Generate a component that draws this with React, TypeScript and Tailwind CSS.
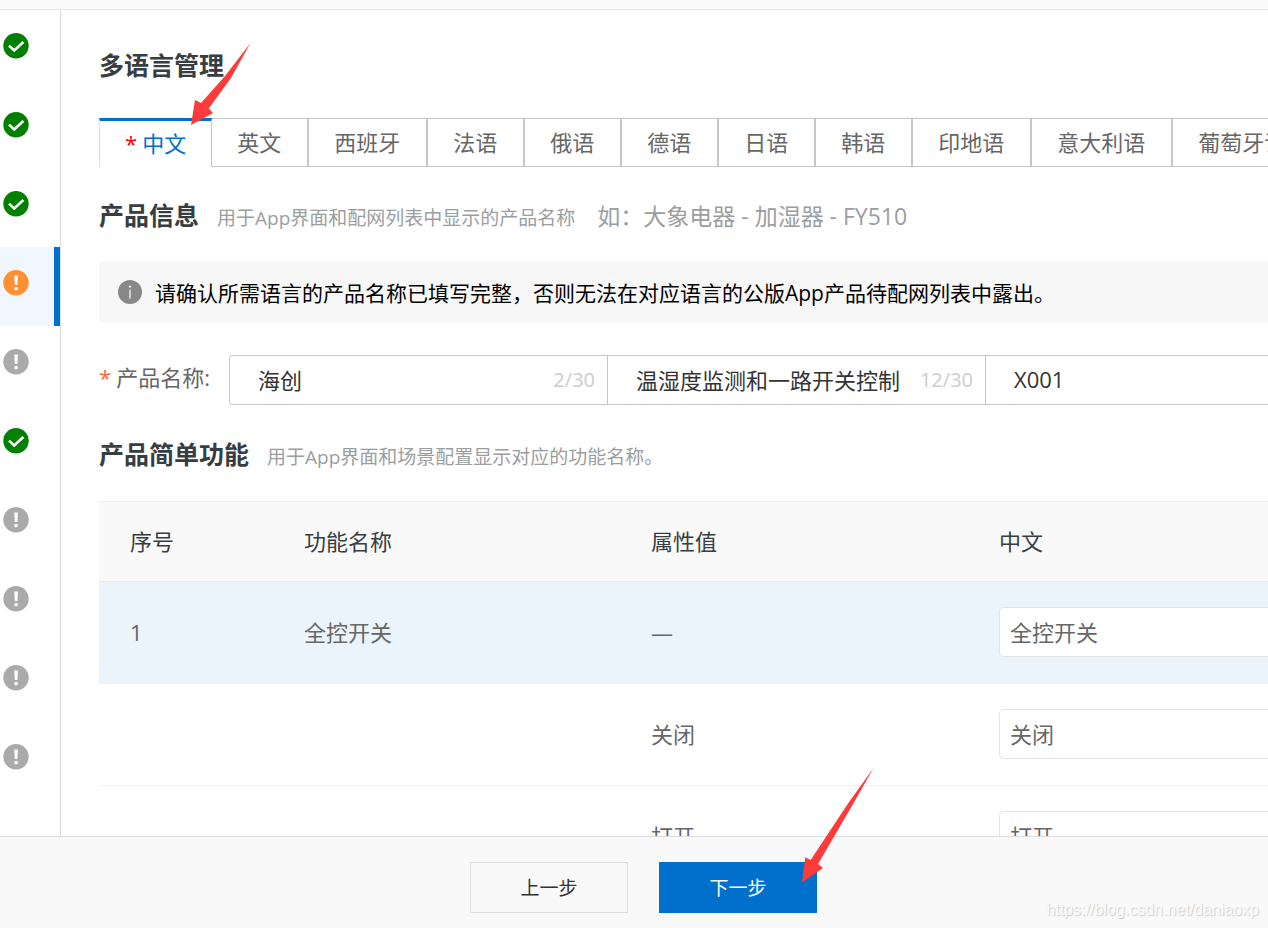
import { useState } from "react";

type StepStatus = "done" | "warning" | "pending";

const STEPS: { id: number; status: StepStatus; active?: boolean }[] = [
  { id: 1, status: "done" },
  { id: 2, status: "done" },
  { id: 3, status: "done" },
  { id: 4, status: "warning", active: true },
  { id: 5, status: "pending" },
  { id: 6, status: "done" },
  { id: 7, status: "pending" },
  { id: 8, status: "pending" },
  { id: 9, status: "pending" },
  { id: 10, status: "pending" },
];

const STATUS_COLOR: Record<StepStatus, string> = {
  done: "text-[#008000]",
  warning: "text-[#ff8f33]",
  pending: "text-[#aaaaaa]",
};

const LANGUAGES = ["中文", "英文", "西班牙", "法语", "俄语", "德语", "日语", "韩语", "印地语", "意大利语", "葡萄牙语"];

const NAME_FIELDS = [
  { id: "brand", value: "海创", count: "2/30" },
  { id: "category", value: "温湿度监测和一路开关控制", count: "12/30" },
  { id: "model", value: "X001", count: "4/30" },
];

const ROWS = [
  { no: "1", name: "全控开关", attr: "—", text: "全控开关", highlight: true },
  { no: "", name: "", attr: "关闭", text: "关闭", highlight: false },
  { no: "", name: "", attr: "打开", text: "打开", highlight: false },
];

function StepIcon({ status }: { status: StepStatus }) {
  return (
    <svg viewBox="0 0 26 26" className={`w-[26px] h-[26px] ${STATUS_COLOR[status]}`} aria-hidden="true">
      <circle cx="13" cy="12.7" r="12.7" fill="currentColor" />
      {status === "done" ? (
        <path d="M6 12.6l5.2 4.8 9.2-8.4" fill="none" stroke="#fff" strokeWidth="2.6" />
      ) : (
        <>
          <path d="M11.3 5.5h3.6l-.5 9.6h-2.6z" fill="#fff" />
          <rect x="11.4" y="17" width="3.4" height="3.3" rx="1.2" fill="#fff" />
        </>
      )}
    </svg>
  );
}

function InfoIcon() {
  return (
    <svg viewBox="0 0 24 24" className="w-6 h-6 shrink-0" aria-hidden="true">
      <circle cx="12" cy="12" r="12" fill="#888" />
      <circle cx="12" cy="6.6" r="1.2" fill="#f0f0f0" />
      <path d="M12 9.8v8.6" stroke="#e4e4e4" strokeWidth="1.6" />
    </svg>
  );
}

export default function App() {
  const [lang, setLang] = useState("中文");

  return (
    <div className="relative flex flex-col h-screen overflow-hidden bg-white text-[#666] font-['Open_Sans','Noto_Sans_CJK_SC',sans-serif]">
      <header className="h-[10px] shrink-0 bg-[#fafafa] border-b border-[#e6e6e6]" />

      <div className="flex flex-1 min-h-0">
        <nav aria-label="步骤" className="w-[61px] shrink-0 border-r border-[#dcdcdc]">
          {STEPS.map((s) => (
            <a
              key={s.id}
              href={`#step-${s.id}`}
              aria-label={`步骤 ${s.id}`}
              className={`flex h-[79px] items-start pt-[23px] pl-[3px] ${s.active ? "bg-[#f0f7ff] border-r-6 border-[#0070cc]" : ""}`}
            >
              <StepIcon status={s.status} />
            </a>
          ))}
        </nav>

        <main className="flex-1 min-w-0 overflow-auto [scrollbar-width:none] pl-[38px] pt-[37px]">
          <div className="min-w-[1390px]">
            <h1 className="text-[25px] leading-9 font-bold text-[#373d41]">多语言管理</h1>

            <div role="tablist" className="flex mt-[35px] text-[22px] leading-[30px]">
              {LANGUAGES.map((l) => (
                <button
                  key={l}
                  role="tab"
                  aria-selected={l === lang}
                  onClick={() => setLang(l)}
                  className={`flex items-center justify-center h-[49px] shrink-0 pb-0.5 border-r ${
                    l === lang
                      ? "border-l border-t-3 border-t-[#0070cc] border-l-[#dedede] border-r-[#c3c7cc] px-[25px] text-[#0070cc]"
                      : "border-y border-l border-[#c3c7cc] pl-[25px] pr-[26px] nth-2:border-l-0 hover:text-[#0070cc]"
                  }`}
                >
                  {l === "中文" && <span className="mr-[5px] text-[#ff0000]">*</span>}
                  {l}
                </button>
              ))}
            </div>

            <div className="flex items-baseline mt-[30px] h-9">
              <h2 className="text-[25px] leading-9 font-bold text-[#373d41]">产品信息</h2>
              <p className="ml-[18px] text-[19px] text-[#9b9ea0]">用于App界面和配网列表中显示的产品名称</p>
              <p className="ml-[22px] text-[23px] leading-9 text-[#9b9ea0]">如：大象电器 - 加湿器 - FY510</p>
            </div>

            <div role="note" className="flex items-center gap-[13px] mt-7 h-[62px] px-[19px] rounded bg-[#f7f7f7] text-[21px] text-black">
              <InfoIcon />
              <p className="pt-[3px]">请确认所需语言的产品名称已填写完整，否则无法在对应语言的公版App产品待配网列表中露出。</p>
            </div>

            <div className="flex mt-8">
              <label htmlFor="brand" className="w-[130px] text-[22px] leading-11">
                <span className="mr-[5px] text-[#ff6a3d]">*</span>产品名称:
              </label>
              <div className="flex h-[50px] rounded border border-[#c3c7cc]">
                {NAME_FIELDS.map((f) => (
                  <div key={f.id} className="flex items-center w-[378px] pl-7 pr-3 border-r last:border-r-0 border-[#c3c7cc]">
                    <input
                      id={f.id}
                      aria-label={f.id === "brand" ? undefined : "产品名称"}
                      defaultValue={f.value}
                      className="flex-1 min-w-0 h-full pb-0.5 text-[22px] text-[#333] outline-none"
                    />
                    <span className="text-xl text-[#ccc]">{f.count}</span>
                  </div>
                ))}
              </div>
            </div>

            <div className="flex items-baseline mt-[31px] h-9">
              <h2 className="text-[25px] leading-9 font-bold text-[#373d41]">产品简单功能</h2>
              <p className="ml-[18px] text-[19px] text-[#9b9ea0]">用于App界面和场景配置显示对应的功能名称。</p>
            </div>

            <table className="table-fixed w-full mt-[29px] text-[22px] leading-[30px] border-t border-[#ebecec] border-separate border-spacing-0">
              <thead className="bg-[#f9f9f9] text-[#373d41]">
                <tr className="h-20 text-left">
                  <th className="w-[174px] px-[31px] pb-0.5 font-normal border-b border-[#ebecec]">序号</th>
                  <th className="w-[347px] px-[31px] pb-0.5 font-normal border-b border-[#ebecec]">功能名称</th>
                  <th className="w-[348px] px-[31px] pb-0.5 font-normal border-b border-[#ebecec]">属性值</th>
                  <th className="px-[31px] pb-0.5 font-normal border-b border-[#ebecec]">中文</th>
                </tr>
              </thead>
              <tbody>
                {ROWS.map((r) => (
                  <tr key={r.attr} className={`h-[102px] ${r.highlight ? "bg-[#ebf3fb]" : ""}`}>
                    <td className="px-[31px] pb-0.5 border-b border-[#eeeff0]">{r.no}</td>
                    <td className="px-[31px] pb-0.5 border-b border-[#eeeff0]">{r.name}</td>
                    <td className="px-[31px] pb-0.5 border-b border-[#eeeff0]">{r.attr}</td>
                    <td className="px-[31px] pb-0.5 border-b border-[#eeeff0]">
                      <input
                        aria-label={`${r.text} 中文`}
                        defaultValue={r.text}
                        className="block w-full h-[50px] px-[10px] pb-0.5 rounded border border-[#e3e4e6] bg-white outline-none"
                      />
                    </td>
                  </tr>
                ))}
              </tbody>
            </table>
          </div>
        </main>
      </div>

      <footer className="relative flex justify-center gap-[31px] shrink-0 h-[92px] pt-[25px] pl-[19px] border-t border-[#dcdcdc] bg-[#f9f9f9] text-[19px]">
        <button className="w-[158px] h-[51px] pt-0.5 border border-[#dcdee0] text-[#333]">上一步</button>
        <button className="relative w-[158px] h-[51px] pt-0.5 bg-[#0070cc] text-white">
          下一步
          <svg viewBox="0 0 72 115" className="absolute right-[-57px] bottom-[30px] w-[72px] h-[115px] pointer-events-none" aria-hidden="true">
            <path d="M71.5 0L46 35.5 8.7 92 3.3 89.3 0 114.5 21 100 16 96 50.5 37z" fill="#ff3a3a" />
          </svg>
        </button>
        <span className="absolute right-[9px] bottom-2 text-base leading-5 text-[#f9f9f9] text-shadow-[1px_1px_1px_#ccc] font-['Liberation_Sans',sans-serif]">
          https://blog.csdn.net/daniaoxp
        </span>
      </footer>

      <svg viewBox="0 0 60 82" className="absolute left-[191px] top-[43px] w-[60px] h-[82px] pointer-events-none" aria-hidden="true">
        <path d="M59.5 0L34 33 10 60 4 57 0 82 22 70 17.7 65.5 40 35z" fill="#ff3a3a" />
      </svg>
    </div>
  );
}
